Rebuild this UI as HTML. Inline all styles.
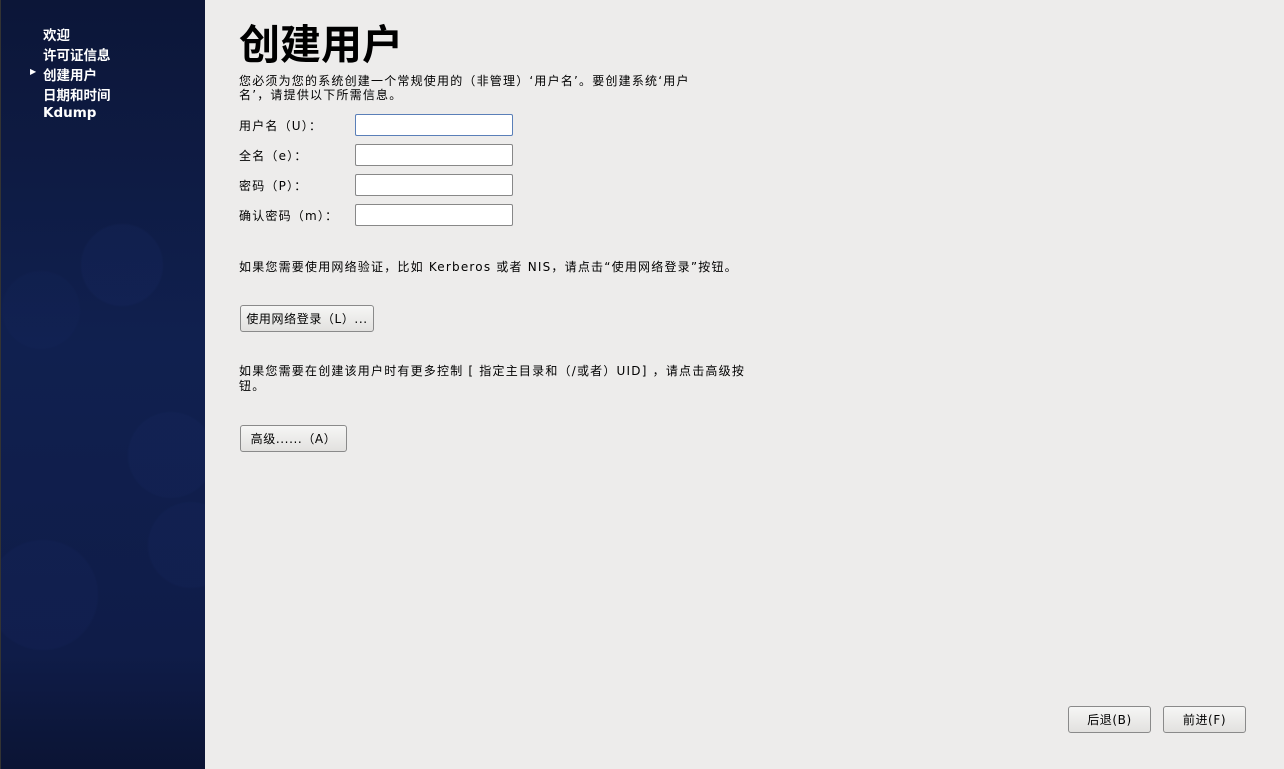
<!DOCTYPE html>
<html><head><meta charset="utf-8"><style>
*{margin:0;padding:0;box-sizing:border-box}
body{width:1284px;height:769px;overflow:hidden;background:#edeceb;font-family:"DejaVu Sans","WenQuanYi Zen Hei","Noto Sans CJK SC",sans-serif;font-size:12px;color:#000;position:relative}
#side{position:absolute;left:0;top:0;width:205px;height:769px;border-left:1px solid #333;
background:radial-gradient(circle at 121px 265px,rgba(40,60,140,.09) 0 40px,transparent 42px),
radial-gradient(circle at 42px 595px,rgba(40,60,140,.07) 0 54px,transparent 56px),
radial-gradient(circle at 40px 310px,rgba(40,60,140,.05) 0 38px,transparent 40px),
radial-gradient(circle at 170px 455px,rgba(40,60,140,.08) 0 42px,transparent 44px),
radial-gradient(circle at 190px 545px,rgba(40,60,140,.08) 0 42px,transparent 44px),
linear-gradient(to bottom,#0c1638 0%,#10204f 45%,#0f1c48 85%,#0b1434 100%)}
#side div{position:absolute;left:42px;color:#fff;font-weight:bold;font-size:13.5px}
.t{position:absolute;left:239px;white-space:nowrap;letter-spacing:1.2px}
input{position:absolute;left:355px;width:158px;height:22px;border:1px solid #888;border-radius:2px;background:#fff}
.btn{position:absolute;border:1px solid #8a8a8a;border-radius:3px;background:linear-gradient(#f6f6f5,#e2e1df);font-size:12px;display:flex;align-items:center;justify-content:center;letter-spacing:.6px}
</style></head><body>
<div id="side">
<div style="top:24px">欢迎</div>
<div style="top:44px">许可证信息</div>
<div style="top:64px"><span style="position:absolute;left:-13px;font-size:8px;top:3px">▶</span>创建用户</div>
<div style="top:84px">日期和时间</div>
<div style="top:105px">Kdump</div>
</div>
<div class="t" style="top:17px;font-size:41px;line-height:48px;font-weight:bold;letter-spacing:0;font-family:'WenQuanYi Zen Hei','Noto Sans CJK SC',sans-serif">创建用户</div>
<div class="t" style="top:74px;line-height:14px">您必须为您的系统创建一个常规使用的（非管理）‘用户名’。要创建系统‘用户<br>名’，请提供以下所需信息。</div>
<div class="t" style="top:117px">用户名（U）：</div>
<div class="t" style="top:147px">全名（e）：</div>
<div class="t" style="top:177px">密码（P）：</div>
<div class="t" style="top:207px">确认密码（m）：</div>
<input style="top:114px;border-color:#5a7fb8">
<input style="top:144px">
<input style="top:174px">
<input style="top:204px">
<div class="t" style="top:258px">如果您需要使用网络验证，比如 Kerberos 或者 NIS，请点击“使用网络登录”按钮。</div>
<div class="btn" style="left:240px;top:305px;width:134px;height:27px">使用网络登录（L）...</div>
<div class="t" style="top:364px;line-height:15px">如果您需要在创建该用户时有更多控制 [ 指定主目录和（/或者）UID] ，请点击高级按<br>钮。</div>
<div class="btn" style="left:240px;top:425px;width:107px;height:27px">高级......（A）</div>
<div class="btn" style="left:1068px;top:706px;width:83px;height:27px">后退(B)</div>
<div class="btn" style="left:1163px;top:706px;width:83px;height:27px">前进(F)</div>
</body></html>
